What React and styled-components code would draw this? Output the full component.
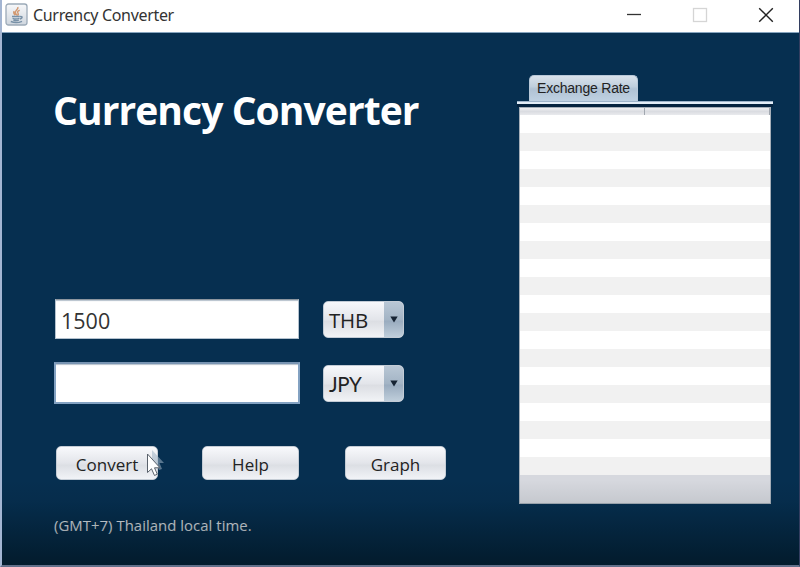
import React from "react";
import styled, { createGlobalStyle } from "styled-components";

const GlobalStyle = createGlobalStyle`
  *, *::before, *::after { box-sizing: border-box; }
  body { margin: 0; overflow: hidden; background: #062f50; }
  button, input { font: inherit; }
`;

const Window = styled.div`
  position: relative;
  width: 800px;
  height: 567px;
  display: flex;
  flex-direction: column;
  border-left: 2px solid #a3b5d2;
  border-right: 1px solid #333e60;
  border-bottom: 2px solid #62708a;
  background: #062f50;
  font-family: "Open Sans", "Noto Sans", sans-serif;
  overflow: hidden;
`;

const TitleBar = styled.header`
  height: 33px;
  flex: none;
  display: flex;
  align-items: center;
  padding: 0 0 3px 3px;
  background: #fff;
  border-bottom: 1px solid #87a5bf;
`;

const WindowTitle = styled.span`
  margin-left: 5px;
  padding-top: 1px;
  flex: 1;
  font-family: "Noto Sans", sans-serif;
  font-size: 16px;
  line-height: 24px;
  letter-spacing: ${(p) => p.$spacing}px;
  color: #333;
`;

const WindowControls = styled.div`
  display: flex;
  gap: 50px;
  padding-right: 25px;
`;

const ControlIcon = styled.svg`
  display: block;
  width: 16px;
  height: 16px;
  fill: none;
  stroke: ${(p) => p.$color};
  stroke-width: ${(p) => p.$weight || 1.3};
`;

const Body = styled.main`
  flex: 1;
  display: flex;
  justify-content: space-between;
  padding: 0 26px 0 52px;
`;

const Form = styled.section`
  width: 400px;
  padding-top: 49px;
  display: flex;
  flex-direction: column;
`;

const Heading = styled.h1`
  margin: 0 0 0 -1px;
  height: 56px;
  line-height: 56px;
  font-size: 39px;
  font-weight: 700;
  letter-spacing: ${(p) => p.$spacing}px;
  white-space: nowrap;
  color: #fff;
`;

const Fields = styled.div`
  margin-top: 160px;
  display: flex;
  flex-direction: column;
  gap: 22px;
`;

const FieldRow = styled.div`
  height: 42px;
  display: flex;
  align-items: center;
  gap: ${(p) => (p.$focused ? 23 : 24)}px;
  padding-left: ${(p) => (p.$focused ? 0 : 1)}px;
`;

const AmountInput = styled.input`
  width: ${(p) => (p.$focused ? 246 : 244)}px;
  height: ${(p) => (p.$focused ? 42 : 40)}px;
  padding: 3px 5px 0;
  border: ${(p) => (p.$focused ? "2px solid #83a2c2" : "1px solid #b4c2cf")};
  border-top-color: ${(p) => (p.$focused ? "#7894b2" : "#8d969f")};
  border-radius: 0;
  outline: none;
  background: #fff;
  box-shadow: inset 0 2px 1px -1px #b6c1cd;
  font-size: 21.5px;
  line-height: 30px;
  color: #333;
`;

const Select = styled.button`
  width: 81px;
  height: 37px;
  padding: 0;
  display: flex;
  border: 1px solid #c2cbd5;
  border-radius: 5px;
  overflow: hidden;
  background: linear-gradient(#f7f8fb, #e3e5ea 50%, #dcdee3 56%, #f1f3f6);
`;

const SelectValue = styled.span`
  flex: 1;
  padding-left: 5px;
  text-align: left;
  font-family: ${(p) => p.$font || "inherit"};
  font-size: 20.5px;
  line-height: 37px;
  letter-spacing: ${(p) => p.$spacing}px;
  color: #222;
`;

const SelectArrow = styled.span`
  width: 19px;
  height: 100%;
  display: flex;
  align-items: center;
  justify-content: center;
  background: linear-gradient(#b9c7d5, #a3b4c5 50%, #9aacbf 55%, #bfcedb);
`;

const Actions = styled.div`
  margin-top: 42px;
  display: flex;
  padding-left: 2px;
`;

const ActionButton = styled.button`
  width: ${(p) => p.$width}px;
  height: 34px;
  padding: 3px 0 0;
  margin-right: ${(p) => p.$gap || 0}px;
  border: 1px solid #c4ccd5;
  border-radius: 5px;
  background: linear-gradient(#f8f9fc, #e3e5ea 50%, #dcdfe4 57%, #f1f3f7);
  font-size: 17px;
  line-height: 28px;
  letter-spacing: ${(p) => p.$spacing || 0}px;
  color: #222;
`;

const TimeNote = styled.p`
  margin: 34px 0 0;
  line-height: 22px;
  font-size: 14.9px;
  letter-spacing: ${(p) => p.$spacing}px;
  color: #eef2f7;
`;

const RatePanel = styled.section`
  width: 256px;
  padding-top: 42px;
`;

const Tab = styled.div`
  width: 109px;
  height: 26px;
  margin-left: 12px;
  border: 1px solid #b8c8d8;
  border-bottom: 0;
  border-radius: 5px 5px 0 0;
  background: linear-gradient(#d9e2eb, #c0cfdd 42%, #b0c2d4 52%, #bfd1e2);
  text-align: center;
  font-family: "Liberation Sans", Arial, sans-serif;
  font-size: 14px;
  line-height: 25px;
  letter-spacing: ${(p) => p.$spacing}px;
  white-space: nowrap;
  color: #222;
`;

const TabRule = styled.div`
  height: 6px;
  background: linear-gradient(#9eb4ca 0 1px, #e2edf7 1px 3px, #05233f 3px);
`;

const RateTable = styled.div`
  width: 252px;
  height: 397px;
  margin-left: 2px;
  display: flex;
  flex-direction: column;
  border: 1px solid #a6afb9;
  background: #d6d8de;
`;

const TableHeader = styled.div`
  height: 7px;
  flex: none;
  display: grid;
  grid-template-columns: 125px 125px;
  background: linear-gradient(#eff0f2, #dadce1 50%, #e9eaed);
`;

const HeaderCell = styled.div`
  border-right: 1px solid #a1a7af;
`;

const TableRow = styled.div`
  height: 18px;
  flex: none;
  background: ${(p) => (p.$striped ? "#f1f1f1" : "#fff")};
`;

const BottomShade = styled.div`
  position: absolute;
  inset: auto 0 0 0;
  height: 85px;
  pointer-events: none;
  background: linear-gradient(rgba(0, 14, 20, 0), rgba(0, 14, 20, 0.07) 25%, rgba(0, 14, 20, 0.6));
`;

const Pointer = styled.svg`
  position: absolute;
  left: 143px;
  top: 449px;
  width: 22px;
  height: 30px;
`;

function JavaIcon() {
  return (
    <svg width="23" height="23" viewBox="0 0 23 23">
      <defs>
        <linearGradient id="tile" x1="0" y1="0" x2="0" y2="1">
          <stop offset="0" stopColor="#f7f8fa" />
          <stop offset="1" stopColor="#cfd6de" />
        </linearGradient>
      </defs>
      <rect x="1" y="1" width="21" height="21" rx="2.5" fill="url(#tile)" stroke="#9caab8" strokeWidth="1.3" />
      <path d="M12.8 4C14 6.4 9 7.7 10.4 10.2L12 12.4M14.7 7.2C12 8.3 12.2 9.2 13.1 10.4 13.8 11.4 13.2 12 12.5 12.7M9.2 8.3C8 9.7 9 10.8 10.2 12.2" fill="none" stroke="#d39a72" strokeWidth="1.5" />
      <path d="M7 13.5H14.8M7.6 15.3Q10.8 16.8 14.3 15.3M8.4 17.2Q11 18.3 13.8 17.2M15 13.6Q18.2 13.2 16.6 15.2L14.9 16.2M5.8 18.5Q11.5 20.8 17 18.3" fill="none" stroke="#7891a7" strokeWidth="1.4" />
    </svg>
  );
}

function CurrencySelect({ value, spacing, font }) {
  return (
    <Select type="button">
      <SelectValue $spacing={spacing} $font={font}>{value}</SelectValue>
      <SelectArrow>
        <svg width="8" height="7" viewBox="0 0 8 7">
          <path d="M.3.5H7.7L4 6.5Z" fill="#162333" />
        </svg>
      </SelectArrow>
    </Select>
  );
}

export default function App() {
  return (
    <>
      <GlobalStyle />
      <Window>
        <TitleBar>
          <JavaIcon />
          <WindowTitle $spacing={-0.32}>Currency Converter</WindowTitle>
          <WindowControls>
            <ControlIcon viewBox="0 0 16 16" $color="#333"><path d="M1 7.5H15" /></ControlIcon>
            <ControlIcon viewBox="0 0 16 16" $color="#d5d5d5"><rect x="1.5" y="1.5" width="13" height="13" /></ControlIcon>
            <ControlIcon viewBox="0 0 16 16" $color="#222" $weight={1.4}><path d="M1.2 1.2L14.8 14.8M14.8 1.2L1.2 14.8" /></ControlIcon>
          </WindowControls>
        </TitleBar>
        <Body>
          <Form>
            <Heading $spacing={-0.92}>Currency Converter</Heading>
            <Fields>
              <FieldRow>
                <AmountInput defaultValue="1500" />
                <CurrencySelect value="THB" spacing={-0.2} />
              </FieldRow>
              <FieldRow $focused>
                <AmountInput $focused />
                <CurrencySelect value="JPY" spacing={-0.3} font="Lato, sans-serif" />
              </FieldRow>
            </Fields>
            <Actions>
              <ActionButton $width={102} $gap={44}>Convert</ActionButton>
              <ActionButton $width={97} $gap={46}>Help</ActionButton>
              <ActionButton $width={101}>Graph</ActionButton>
            </Actions>
            <TimeNote $spacing={0.04}>(GMT+7) Thailand local time.</TimeNote>
          </Form>
          <RatePanel>
            <Tab $spacing={-0.22}>Exchange Rate</Tab>
            <TabRule />
            <RateTable>
              <TableHeader><HeaderCell /><HeaderCell /></TableHeader>
              {Array.from({ length: 20 }, (_, i) => <TableRow key={i} $striped={i % 2 === 1} />)}
            </RateTable>
          </RatePanel>
        </Body>
        <BottomShade />
        <Pointer viewBox="0 0 22 30">
          <path d="M7 1V19L11 15L14 21L17 20L14.5 14H19Z" fill="#9fb3c4" fillOpacity=".55" />
          <path d="M2.5 5V23.5L6.5 19.8L9.5 26.5L12.3 25.2L9.5 18.8H15Z" fill="#fff" stroke="#59616b" strokeWidth="1" />
        </Pointer>
      </Window>
    </>
  );
}
